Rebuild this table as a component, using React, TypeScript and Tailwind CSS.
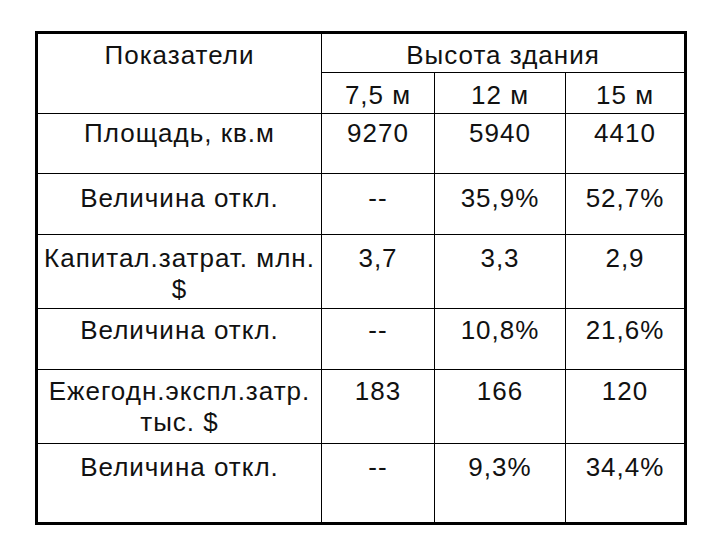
const rows = [
  { label: ['Площадь, кв.м'], values: ['9270', '5940', '4410'], h: 'h-[60px]', pt: 'pt-[4px]' },
  { label: ['Величина откл.'], values: ['--', '35,9%', '52,7%'], h: 'h-[61px]', pt: 'pt-[9px]' },
  { label: ['Капитал.затрат. млн.', '$'], values: ['3,7', '3,3', '2,9'], h: 'h-[74px]', pt: 'pt-[8px]' },
  { label: ['Величина откл.'], values: ['--', '10,8%', '21,6%'], h: 'h-[61px]', pt: 'pt-[6px]' },
  { label: ['Ежегодн.экспл.затр.', 'тыс. $'], values: ['183', '166', '120'], h: 'h-[74px]', pt: 'pt-[6px]' },
  { label: ['Величина откл.'], values: ['--', '9,3%', '34,4%'], h: 'h-[80px]', pt: 'pt-[8px]' },
];

export default function App() {
  return (
    <div className="w-[720px] h-[540px] bg-white pt-[31px] pl-[35px] font-['Liberation_Sans',Arial,sans-serif] text-[26px] tracking-[1px] leading-[31px] text-[#111]">
      <table className="table-fixed border-collapse border-[3px] border-black w-[649px]">
        <colgroup>
          <col className="w-[285px]" />
          <col className="w-[113px]" />
          <col className="w-[131px]" />
          <col className="w-[120px]" />
        </colgroup>
        <tbody>
          <tr className="h-[40px]">
            <td rowSpan={2} className="border border-black align-top text-center pt-[6px] p-0">
              Показатели
            </td>
            <td colSpan={3} className="border border-black align-top text-center pt-[6px] p-0">
              Высота здания
            </td>
          </tr>
          <tr className="h-[41px]">
            {['7,5 м', '12 м', '15 м'].map((v) => (
              <td key={v} className="border border-black align-top text-center pt-[7px] p-0">
                {v}
              </td>
            ))}
          </tr>
          {rows.map((r, i) => (
            <tr key={i} className={r.h}>
              <td className={`border border-black align-top text-center p-0 ${r.pt}`}>
                {r.label.map((l, j) => (
                  <div key={j}>{l}</div>
                ))}
              </td>
              {r.values.map((v, j) => (
                <td key={j} className={`border border-black align-top text-center p-0 ${r.pt}`}>
                  {v}
                </td>
              ))}
            </tr>
          ))}
        </tbody>
      </table>
    </div>
  );
}
